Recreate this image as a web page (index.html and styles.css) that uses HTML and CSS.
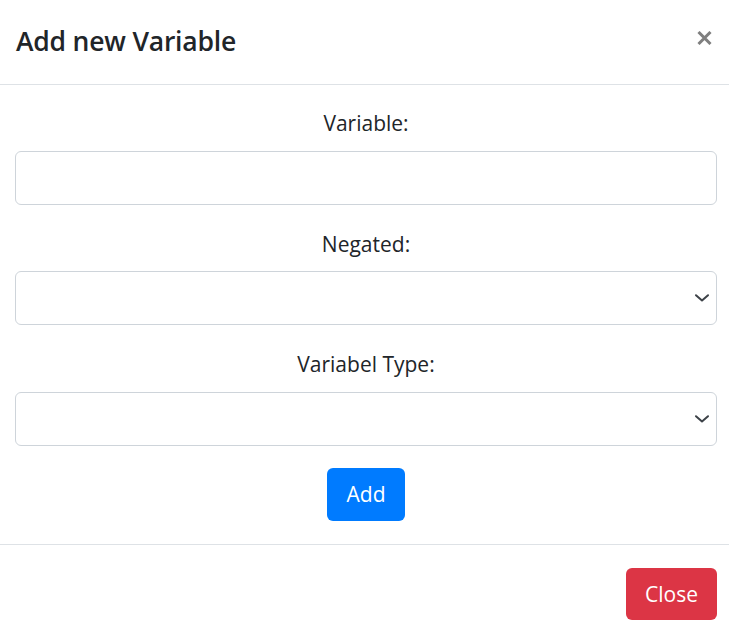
FILE: index.html
```html
<!DOCTYPE html>
<html lang="en">
<head>
<meta charset="utf-8">
<title>Add new Variable</title>
<link rel="stylesheet" href="styles.css">
</head>
<body>
<div class="modal">
  <div class="modal-header">
    <h4 class="modal-title">Add new Variable</h4>
    <button class="close" type="button" aria-label="Close">
      <svg width="15" height="14" viewBox="0 0 15 14"><path d="M1.5 1 L13.5 13 M13.5 1 L1.5 13" stroke="#7f7f7f" stroke-width="3" fill="none"/></svg>
    </button>
  </div>
  <div class="modal-body">
    <div class="group">
      <label class="label" for="v">Variable:</label>
      <input class="field" id="v" type="text">
    </div>
    <div class="group">
      <label class="label" for="n">Negated:</label>
      <div class="field select" id="n">
        <svg class="chev" width="16" height="8" viewBox="0 0 16 8"><path d="M2 1.2 L8 6.5 L14 1.2" stroke="#3d4248" stroke-width="2" fill="none" stroke-linecap="round" stroke-linejoin="round"/></svg>
      </div>
    </div>
    <div class="group">
      <label class="label" for="t">Variabel Type:</label>
      <div class="field select" id="t">
        <svg class="chev" width="16" height="8" viewBox="0 0 16 8"><path d="M2 1.2 L8 6.5 L14 1.2" stroke="#3d4248" stroke-width="2" fill="none" stroke-linecap="round" stroke-linejoin="round"/></svg>
      </div>
    </div>
    <div class="actions">
      <button class="btn btn-primary" type="button">Add</button>
    </div>
  </div>
  <div class="modal-footer">
    <button class="btn btn-danger btn-close" type="button">Close</button>
  </div>
</div>
</body>
</html>
```
FILE: styles.css
```css
* { box-sizing: border-box; }
html, body { margin: 0; padding: 0; background: #fff; }
body {
  font-family: "Open Sans", "Noto Sans", sans-serif;
  color: #212529;
  width: 729px;
  overflow: hidden;
}
.modal { width: 729px; }
.modal-header {
  height: 85px;
  border-bottom: 1px solid #dee2e6;
  display: flex;
  align-items: center;
  justify-content: space-between;
  padding: 0 16px 2px 16px;
}
.modal-title {
  margin: 0;
  font-size: 26.5px;
  font-weight: 600;
  line-height: 32px;
  letter-spacing: -0.2px;
}
.close {
  background: none;
  border: 0;
  padding: 0;
  margin: -6px 1px 0 0;
  width: 15px;
  height: 14px;
  display: flex;
}
.modal-body {
  padding: 22px 12px 23px 15px;
}
.group { margin-bottom: 23px; }
.label {
  display: block;
  text-align: center;
  font-size: 21px;
  line-height: 32px;
  margin-bottom: 11.5px;
}
.field {
  display: block;
  width: 100%;
  height: 54px;
  border: 1px solid #ced4da;
  border-radius: 6px;
  background: #fff;
  font-family: inherit;
  font-size: 20px;
  padding: 0 16px;
}
.select {
  display: flex;
  align-items: center;
  justify-content: flex-end;
  padding-right: 6px;
}
.chev { display: block; }
.actions {
  display: flex;
  justify-content: center;
  margin-top: -1px;
}
.btn {
  font-family: inherit;
  border: 0;
  border-radius: 6px;
  color: #fff;
  font-size: 21px;
  line-height: 30px;
  height: 53px;
  padding: 0 18px;
}
.btn-primary { background: #007bff; width: 78px; }
.btn-danger { background: #dc3545; }
.modal-footer {
  border-top: 1px solid #dee2e6;
  display: flex;
  justify-content: flex-end;
  padding: 23px 12px 0 0;
}
.btn-close { width: 91px; height: 52px; }
```
